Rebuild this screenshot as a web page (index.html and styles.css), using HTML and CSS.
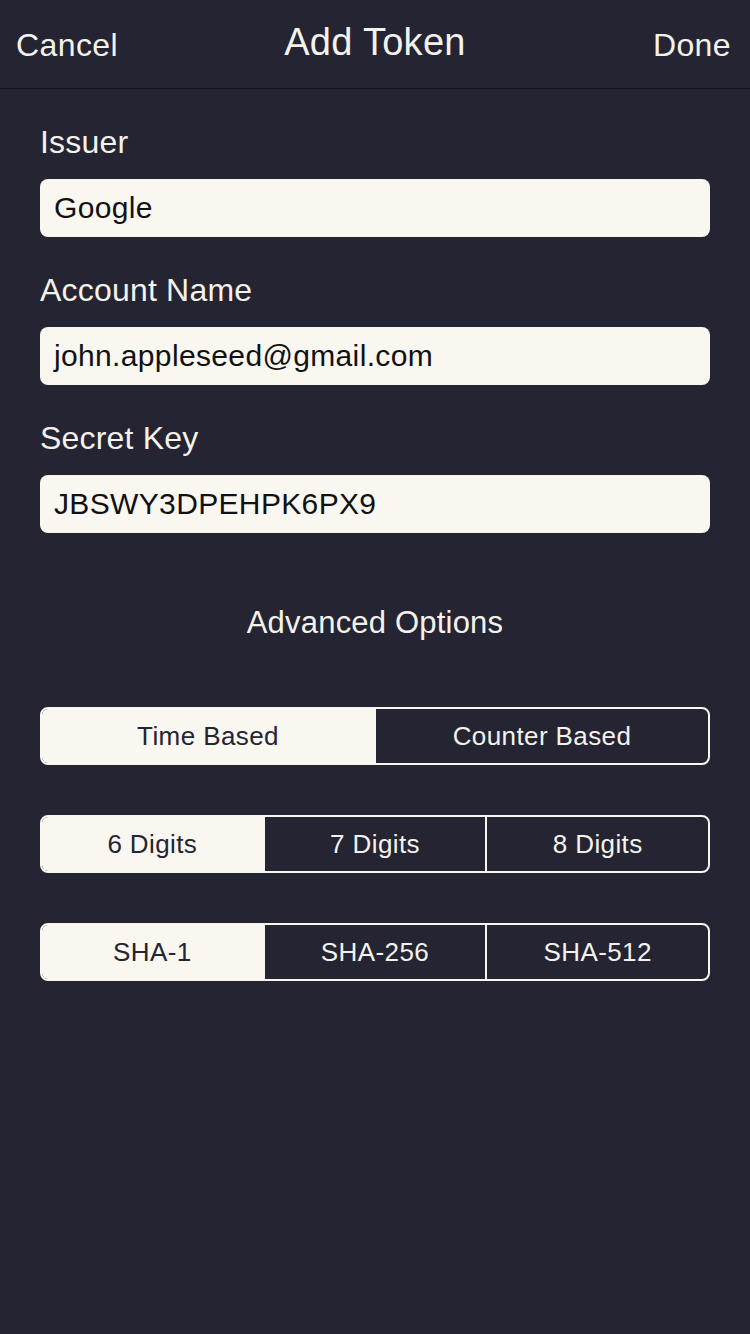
FILE: index.html
```html
<!DOCTYPE html>
<html>
<head>
<meta charset="utf-8">
<link rel="stylesheet" href="styles.css">
</head>
<body>
<div class="screen">
  <header class="navbar">
    <span class="nav-btn">Cancel</span>
    <span class="nav-title">Add Token</span>
    <span class="nav-btn">Done</span>
  </header>
  <main class="form">
    <div class="label">Issuer</div>
    <div class="field">Google</div>
    <div class="label">Account Name</div>
    <div class="field">john.appleseed@gmail.com</div>
    <div class="label">Secret Key</div>
    <div class="field">JBSWY3DPEHPK6PX9</div>
    <div class="section-title">Advanced Options</div>
    <div class="segmented first-seg">
      <div class="seg selected">Time Based</div>
      <div class="seg">Counter Based</div>
    </div>
    <div class="segmented">
      <div class="seg selected">6 Digits</div>
      <div class="seg">7 Digits</div>
      <div class="seg">8 Digits</div>
    </div>
    <div class="segmented">
      <div class="seg selected">SHA-1</div>
      <div class="seg">SHA-256</div>
      <div class="seg">SHA-512</div>
    </div>
  </main>
</div>
</body>
</html>
```

FILE: styles.css
```css
html, body {
  margin: 0;
  padding: 0;
}
body {
  background: #242432;
  font-family: "Liberation Sans", Arial, sans-serif;
  color: #f4f2ec;
}
.screen {
  width: 750px;
  height: 1334px;
  background: #242432;
}
.navbar {
  height: 88px;
  border-bottom: 1px solid #15151d;
  display: flex;
  align-items: center;
  justify-content: space-between;
  padding: 0 19px 0 16px;
  position: relative;
}
.nav-btn {
  font-size: 32px;
  letter-spacing: 0.4px;
  line-height: 40px;
  margin-top: 2px;
}
.nav-title {
  position: absolute;
  left: 0;
  right: 0;
  text-align: center;
  font-size: 38px;
  letter-spacing: 0.3px;
  line-height: 44px;
  top: 20px;
  pointer-events: none;
}
.form {
  padding: 0 40px;
  display: flex;
  flex-direction: column;
}
.label {
  font-size: 32px;
  letter-spacing: 0.2px;
  line-height: 40px;
  margin-top: 33px;
  height: 40px;
}
.field {
  margin-top: 17px;
  height: 58px;
  background: #f9f7f0;
  border-radius: 8px;
  color: #111114;
  font-size: 30px;
  letter-spacing: 0.35px;
  line-height: 58px;
  padding-left: 14px;
  box-sizing: border-box;
}
.section-title {
  margin-top: 70px;
  text-align: center;
  font-size: 31px;
  letter-spacing: 0.2px;
  line-height: 40px;
  height: 40px;
}
.segmented {
  margin-top: 50px;
  height: 58px;
  box-sizing: border-box;
  border: 2px solid #f9f7f0;
  border-radius: 8px;
  display: flex;
  overflow: hidden;
}
.segmented.first-seg {
  margin-top: 64px;
}
.seg {
  flex: 1 1 0;
  display: flex;
  align-items: center;
  justify-content: center;
  font-size: 26px;
  letter-spacing: 0.4px;
  color: #f4f2ec;
  border-left: 2px solid #f9f7f0;
}
.seg:first-child {
  border-left: none;
}
.seg.selected {
  background: #f9f7f0;
  color: #242432;
}
```
